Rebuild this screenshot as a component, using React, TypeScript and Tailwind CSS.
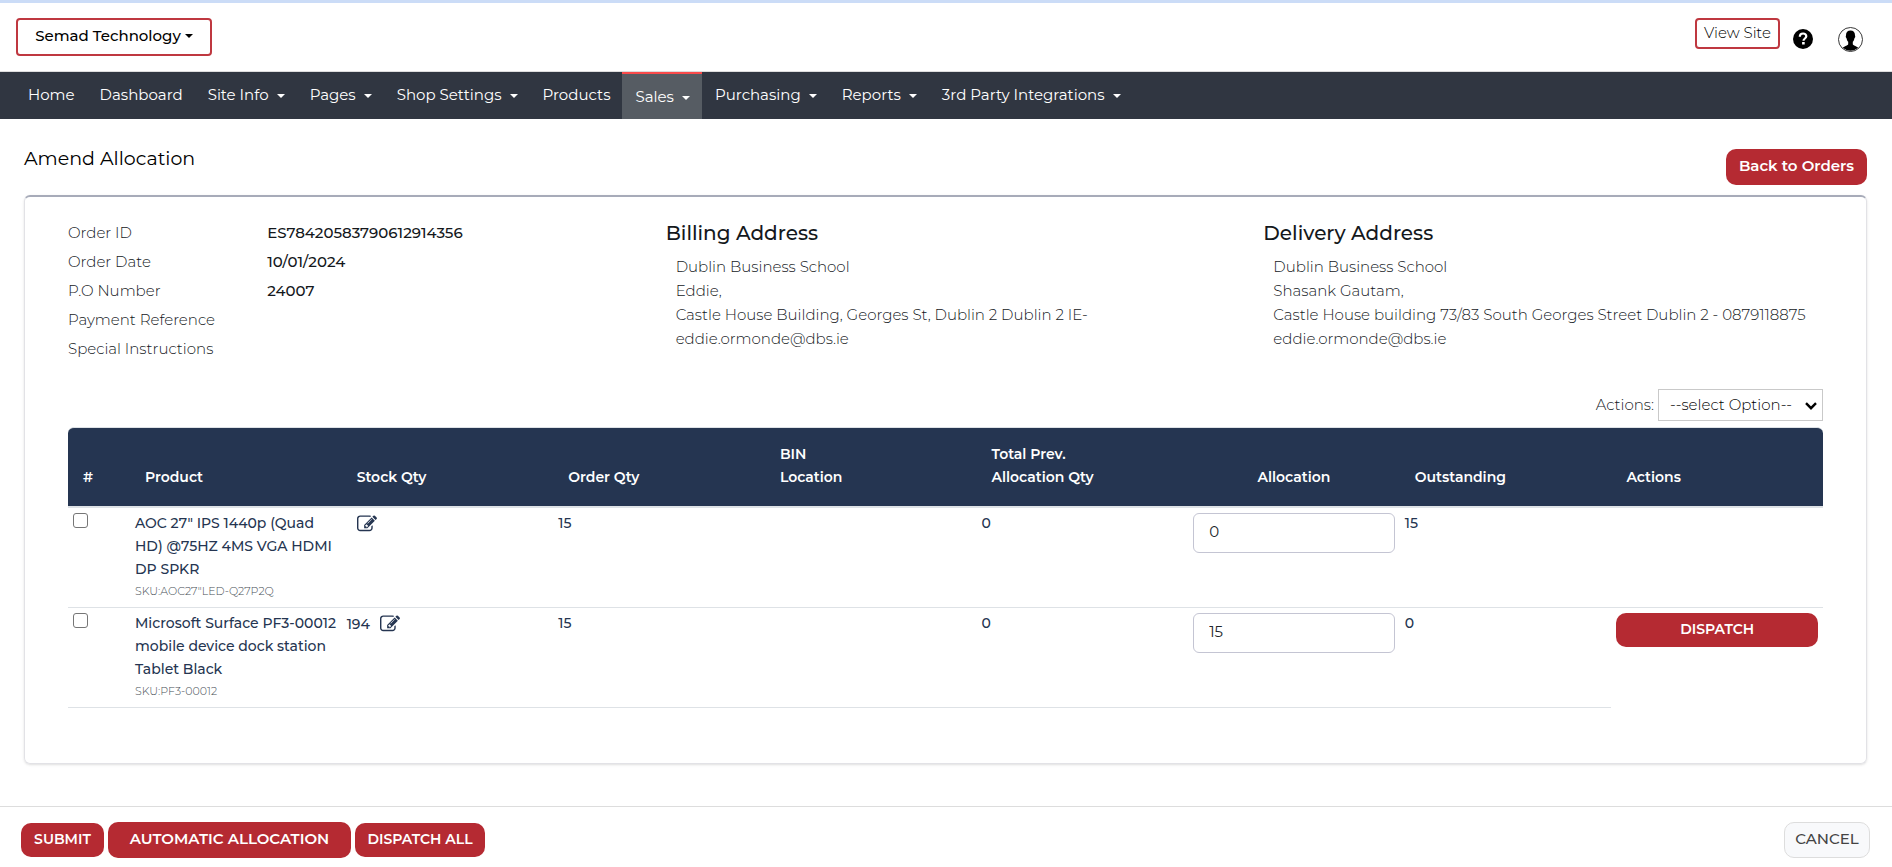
import { useState } from "react";

const navItems = [
  { label: "Home", menu: false },
  { label: "Dashboard", menu: false },
  { label: "Site Info", menu: true },
  { label: "Pages", menu: true },
  { label: "Shop Settings", menu: true },
  { label: "Products", menu: false },
  { label: "Sales", menu: true, active: true },
  { label: "Purchasing", menu: true },
  { label: "Reports", menu: true },
  { label: "3rd Party Integrations", menu: true },
];

const orderDetails = [
  ["Order ID", "ES78420583790612914356"],
  ["Order Date", "10/01/2024"],
  ["P.O Number", "24007"],
  ["Payment Reference", ""],
  ["Special Instructions", ""],
];

const addresses = [
  {
    title: "Billing Address",
    lines: [
      "Dublin Business School",
      "Eddie,",
      "Castle House Building, Georges St, Dublin 2 Dublin 2 IE-",
      "eddie.ormonde@dbs.ie",
    ],
  },
  {
    title: "Delivery Address",
    lines: [
      "Dublin Business School",
      "Shasank Gautam,",
      "Castle House building 73/83 South Georges Street Dublin 2 - 0879118875",
      "eddie.ormonde@dbs.ie",
    ],
  },
];

const rows = [
  {
    name: 'AOC 27" IPS 1440p (Quad HD) @75HZ 4MS VGA HDMI DP SPKR',
    sku: 'SKU:AOC27"LED-Q27P2Q',
    stock: "",
    ordered: "15",
    previous: "0",
    allocation: "0",
    outstanding: "15",
    dispatch: false,
  },
  {
    name: "Microsoft Surface PF3-00012 mobile device dock station Tablet Black",
    sku: "SKU:PF3-00012",
    stock: "194",
    ordered: "15",
    previous: "0",
    allocation: "15",
    outstanding: "0",
    dispatch: true,
  },
];

function Caret() {
  return (
    <svg viewBox="0 0 8 4" className="h-1 w-2 shrink-0" fill="currentColor" aria-hidden="true">
      <path d="M0 0h8L4 4z" />
    </svg>
  );
}

function EditIcon() {
  return (
    <svg viewBox="0 0 1792 1792" className="size-5" fill="currentColor" aria-hidden="true">
      <path d="M888 1184l116-116-152-152-116 116v56h96v96h56zm440-720q-16-16-33 1l-350 350q-17 17-1 33t33-1l350-350q17-17 1-33zm80 594v190q0 119-84.5 203.5t-203.5 84.5h-832q-119 0-203.5-84.5t-84.5-203.5v-832q0-119 84.5-203.5t203.5-84.5h832q63 0 117 25 15 7 18 23 3 17-9 29l-49 49q-14 14-32 8-23-6-45-6h-832q-66 0-113 47t-47 113v832q0 66 47 113t113 47h832q66 0 113-47t47-113v-126q0-13 9-22l64-64q15-15 35-7t20 29zm-96-738l288 288-672 672h-288v-288zm444 132l-92 92-288-288 92-92q28-28 68-28t68 28l152 152q28 28 28 68t-28 68z" />
    </svg>
  );
}

function HelpIcon() {
  return (
    <svg viewBox="0 0 20 20" className="size-5" aria-hidden="true">
      <circle cx="10" cy="10" r="10" fill="#000" />
      <path d="M6.800 7.700C6.800 5.500 8.200 4.500 10.100 4.500s3.200 1 3.200 2.800c0 2.200-2.800 2.200-2.800 4.500" fill="none" stroke="#fff" strokeWidth="2.200" />
      <rect x="9.100" y="13" width="2.600" height="2.500" fill="#fff" />
    </svg>
  );
}

function UserIcon() {
  return (
    <svg viewBox="0 0 25 25" className="size-[25px]" aria-hidden="true">
      <circle cx="12.5" cy="12.5" r="12" fill="#fff" stroke="#222" strokeWidth="0.9" />
      <path
        d="M12.5 3.6c-3 0-4.6 1.9-4.5 4.8 0 .6-.4.8-.2 1.700.2.8.6 1 .8 1.300.3 1.500.8 2.500 1.600 3.300v2.500c-.3 1.300-3.600 1.700-5.500 3.600a12 12 0 0 0 15.600 0c-1.900-1.900-5.200-2.300-5.500-3.600v-2.500c.8-.8 1.300-1.800 1.600-3.300.2-.3.600-.5.800-1.300.2-.9-.2-1.100-.2-1.700.1-2.900-1.500-4.800-4.500-4.800z"
        fill="#000"
      />
    </svg>
  );
}

export default function App() {
  const [values, setValues] = useState(rows.map((r) => r.allocation));

  return (
    <div className="flex min-h-screen flex-col border-t-3 border-[#cbdcf7] bg-white font-['Montserrat','Inter',sans-serif] text-[15px] text-[#14181c]">
      <header className="flex h-[69px] items-start justify-between border-b border-[#dddddd] pt-[15px] pr-[29px] pl-4">
        <button
          type="button"
          className="flex h-[38px] w-[196px] items-center justify-center gap-1 rounded-sm border-2 border-[#bf3840] pb-0.5 text-[15px] font-medium text-black"
        >
          Semad Technology
          <Caret />
        </button>
        <div className="flex items-start">
          <a
            href="#site"
            className="flex h-[31px] w-[85px] justify-center rounded-sm border-2 border-[#bf3840] text-[15px] leading-[26px] font-light whitespace-nowrap text-black"
          >
            View Site
          </a>
          <a href="#help" aria-label="Help" className="mt-[11px] ml-[13px]">
            <HelpIcon />
          </a>
          <button type="button" aria-label="Account" className="mt-[9px] ml-[25px]">
            <UserIcon />
          </button>
        </div>
      </header>

      <nav className="flex h-[47px] bg-[#303641] pl-[15px] text-[15px] text-white">
        {navItems.map((item) => (
          <a
            key={item.label}
            href="#nav"
            className={
              item.active
                ? "flex items-center gap-2 border-t-2 border-[#fa4b4b] bg-[#565c63] pt-0.5 pr-3 pl-[13px]"
                : "flex items-center gap-2 pr-3 pl-[13px]"
            }
          >
            {item.label}
            {item.menu && <Caret />}
          </a>
        ))}
      </nav>

      <main className="grow pr-[25px] pl-6">
        <div className="flex items-start justify-between pt-[30px] pb-[10px]">
          <h1 className="text-[19px] leading-5 font-normal text-black">Amend Allocation</h1>
          <a
            href="#orders"
            className="flex h-9 w-[141px] items-center justify-center rounded-[10px] bg-[#b52a32] pb-0.5 text-[15px] font-semibold whitespace-nowrap text-white"
          >
            Back to Orders
          </a>
        </div>

        <section className="rounded-md border border-t-2 border-[#e2e2e6] border-t-[#a7abb9] px-7 pt-6 pb-[55px] shadow-sm">
          <div className="-mr-2 grid grid-cols-3 leading-6">
            <dl>
              {orderDetails.map(([label, value]) => (
                <div key={label} className="grid h-[29px] grid-cols-3">
                  <dt className="pl-[15px] font-light whitespace-nowrap">{label}</dt>
                  <dd className="col-span-2 pl-[15px] font-medium">{value}</dd>
                </div>
              ))}
            </dl>
            {addresses.map((address) => (
              <div key={address.title} className="px-[15px]">
                <h2 className="text-xl leading-6 font-medium">{address.title}</h2>
                <address className="pt-[10px] pl-[10px] font-light whitespace-nowrap not-italic">
                  {address.lines.map((line) => (
                    <div key={line}>{line}</div>
                  ))}
                </address>
              </div>
            ))}
          </div>

          <div className="flex items-center justify-end gap-1 px-[15px] pt-[23px] pb-1.5 font-light">
            <label htmlFor="bulk-action">Actions:</label>
            <div className="relative">
              <select
                id="bulk-action"
                className="block h-8 w-[165px] appearance-none border border-[#c9c9c9] bg-white pl-[11px] text-[15px] text-black"
              >
                <option>--select Option--</option>
              </select>
              <svg viewBox="0 0 12 8" className="pointer-events-none absolute top-[13px] right-1.5 h-2 w-3" fill="none" stroke="#000" strokeWidth="2.4" aria-hidden="true">
                <path d="M1 1.200l5 5 5-5" />
              </svg>
            </div>
          </div>

          <div className="px-[15px]">
            <table className="w-full table-fixed border-separate border-spacing-0 text-sm leading-[23px] font-medium text-[#253551]">
              <thead>
                <tr className="text-left align-bottom text-white [&>th]:border-t [&>th]:border-b-2 [&>th]:border-[#dee2e6] [&>th]:bg-[#253551] [&>th]:pt-[15px] [&>th]:pb-[17px] [&>th]:pl-[15px] [&>th]:font-semibold">
                  <th className="w-[62px] rounded-tl-md">#</th>
                  <th>Product</th>
                  <th>Stock Qty</th>
                  <th>Order Qty</th>
                  <th>
                    BIN
                    <br />
                    Location
                  </th>
                  <th>
                    Total Prev.
                    <br />
                    Allocation Qty
                  </th>
                  <th className="pr-[15px] text-center">Allocation</th>
                  <th>Outstanding</th>
                  <th className="rounded-tr-md">Actions</th>
                </tr>
              </thead>
              <tbody>
                {rows.map((row, i) => (
                  <tr
                    key={row.sku}
                    className="h-[100px] align-top [&>td]:border-b [&>td]:border-[#dee2e6] [&>td]:px-[5px] [&>td]:pt-1 last:[&>td:last-child]:border-b-0"
                  >
                    <td>
                      <input
                        type="checkbox"
                        aria-label={`Select ${row.name}`}
                        className="mt-px block size-[15px] appearance-none rounded-[3px] border border-[#767676] bg-white checked:bg-[#253551]"
                      />
                    </td>
                    <td>
                      <div>{row.name}</div>
                      <div className="text-[11px] leading-5 font-light text-[#495057]">{row.sku}</div>
                    </td>
                    <td>
                      <div className="flex h-6 items-center gap-[10px]">
                        <span>{row.stock}</span>
                        <button type="button" aria-label="Edit stock quantity">
                          <EditIcon />
                        </button>
                      </div>
                    </td>
                    <td>{row.ordered}</td>
                    <td></td>
                    <td>{row.previous}</td>
                    <td>
                      <input
                        type="text"
                        aria-label={`Allocation for ${row.name}`}
                        value={values[i]}
                        onChange={(e) => setValues(values.map((v, n) => (n === i ? e.target.value : v)))}
                        className="mt-px block h-10 w-full rounded-md border border-[#c4c5d3] pr-4 pb-1 pl-[15px] text-[15px] font-normal text-[#212529]"
                      />
                    </td>
                    <td>{row.outstanding}</td>
                    <td>
                      {row.dispatch && (
                        <button
                          type="button"
                          className="mt-px block h-[34px] w-full rounded-[10px] bg-[#b52a32] pb-0.5 text-sm font-semibold text-white"
                        >
                          DISPATCH
                        </button>
                      )}
                    </td>
                  </tr>
                ))}
              </tbody>
            </table>
          </div>
        </section>
      </main>

      <footer className="flex h-[61px] items-start justify-between border-t border-[#dddddd] pt-[15px] pr-[22px] pl-[21px]">
        <div className="flex items-center gap-1 font-semibold text-white">
          <button type="button" className="h-[34px] w-[83px] rounded-[10px] bg-[#b52a32] pb-0.5 text-sm">
            SUBMIT
          </button>
          <button type="button" className="h-9 w-[243px] rounded-[10px] bg-[#b52a32] pb-0.5 text-[15px]">
            AUTOMATIC ALLOCATION
          </button>
          <button type="button" className="h-[34px] w-[130px] rounded-[10px] bg-[#b52a32] pb-0.5 text-sm">
            DISPATCH ALL
          </button>
        </div>
        <button
          type="button"
          className="h-9 w-[86px] rounded-[10px] border border-[#dddddd] bg-[#f8f9fb] pb-0.5 text-[15px] font-medium text-[#444444]"
        >
          CANCEL
        </button>
      </footer>
    </div>
  );
}
